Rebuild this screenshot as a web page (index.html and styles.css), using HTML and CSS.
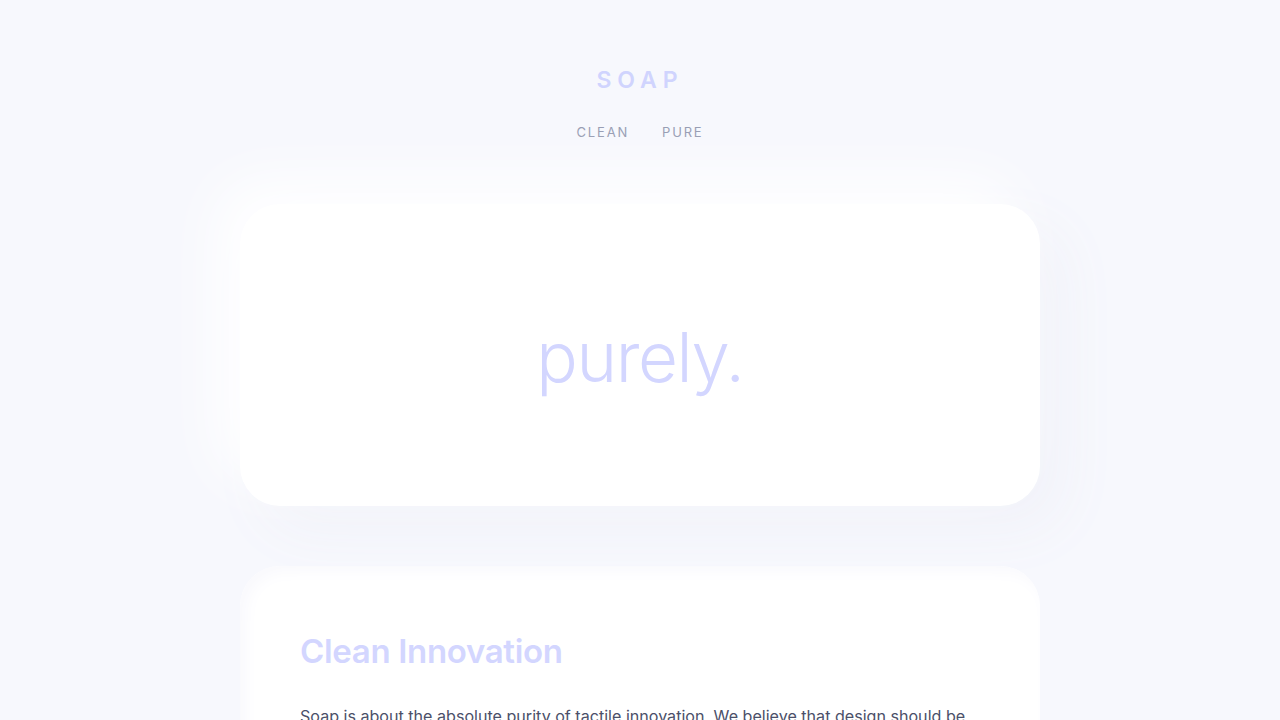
FILE: index.html
```html
<!DOCTYPE html>
<html lang="en">
<head>
<meta charset="utf-8">
<title>Soap</title>
<link rel="stylesheet" href="styles.css">
</head>
<body>
<header class="site-header">
  <div class="logo">SOAP</div>
  <nav class="nav">
    <a href="#" class="nav-link">CLEAN</a>
    <a href="#" class="nav-link">PURE</a>
  </nav>
</header>
<main class="main">
  <section class="card hero">
    <h1 class="hero-title">purely.</h1>
  </section>
  <section class="card card-inset content">
    <h2 class="section-title">Clean Innovation</h2>
    <p class="section-text">Soap is about the absolute purity of tactile innovation. We believe that design should be invisible, leaving only the essence of the experience behind. Every surface is considered, every detail refined.</p>
  </section>
</main>
</body>
</html>
```

FILE: styles.css
```css
* { box-sizing: border-box; }

html, body {
  margin: 0;
  padding: 0;
}

body {
  background: #f7f8fd;
  font-family: "Inter", "Noto Sans", "Liberation Sans", sans-serif;
  color: #4b5069;
  overflow: hidden;
}

.site-header {
  padding-top: 60px;
  display: flex;
  flex-direction: column;
  align-items: center;
}

.logo {
  font-size: 23px;
  line-height: 40px;
  font-weight: 600;
  letter-spacing: 0.26em;
  color: #d0d4fe;
}

.nav {
  margin-top: 20px;
  display: flex;
  gap: 33px;
  line-height: 24px;
}

.nav-link {
  font-size: 13px;
  letter-spacing: 0.14em;
  color: #959bb2;
  text-decoration: none;
  font-weight: 400;
}

.main {
  margin: 60px auto 0;
  width: 800px;
  display: flex;
  flex-direction: column;
  gap: 60px;
}

.card {
  background: #ffffff;
  border-radius: 40px;
  box-shadow: -24px -24px 60px #ffffff, 24px 24px 60px #f1f2f9;
}

.hero {
  height: 302px;
  display: flex;
  align-items: center;
  justify-content: center;
}

.hero-title {
  margin: 0;
  font-size: 69px;
  font-weight: 300;
  letter-spacing: -0.02em;
  color: #d3d6ff;
  line-height: 1;
  padding-top: 4px;
}

.card-inset {
  box-shadow: inset 6px 6px 16px #f9f9fd, inset -6px -6px 16px #ffffff;
}

.content {
  padding: 64px 60px 60px;
}

.section-title {
  margin: 0;
  font-size: 33px;
  line-height: 43px;
  font-weight: 600;
  letter-spacing: -0.01em;
  color: #d3d6ff;
}

.section-text {
  margin: 30px 0 0;
  font-size: 16.1px;
  line-height: 1.7;
  color: #4b5069;
}
```
